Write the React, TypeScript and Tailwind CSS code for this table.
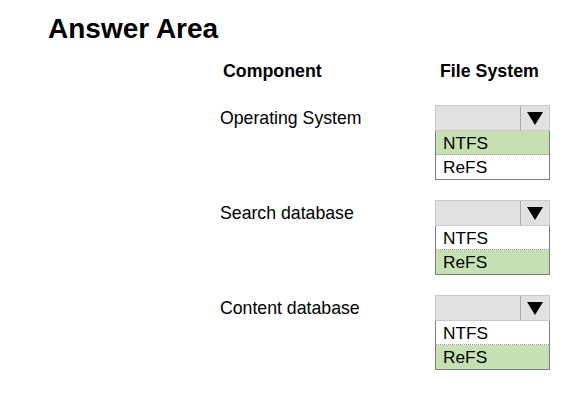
import React from 'react';

type Choice = { label: string; picked: boolean };

const rows: { component: string; choices: Choice[] }[] = [
  {
    component: 'Operating System',
    choices: [
      { label: 'NTFS', picked: true },
      { label: 'ReFS', picked: false },
    ],
  },
  {
    component: 'Search database',
    choices: [
      { label: 'NTFS', picked: false },
      { label: 'ReFS', picked: true },
    ],
  },
  {
    component: 'Content database',
    choices: [
      { label: 'NTFS', picked: false },
      { label: 'ReFS', picked: true },
    ],
  },
];

function Dropdown({ choices }: { choices: Choice[] }) {
  return (
    <div className="w-[115px]">
      <div className="flex h-[26px] border border-[#c9c9c9] bg-[#e1e1e1]">
        <div className="flex-1" />
        <div className="flex w-[29px] items-center justify-center border-l border-[#a9a9a9]">
          <svg width="16" height="13" viewBox="0 0 16 13">
            <polygon points="0,0 16,0 8,13" fill="#000" />
          </svg>
        </div>
      </div>
      <div className="border border-t-0 border-[#7d7d7d]">
        {choices.map((c, i) => (
          <div
            key={c.label}
            className={`flex h-[24px] items-center pl-[7px] pt-[2px] text-[17.3px] leading-none ${
              c.picked ? 'bg-[#c6e0b4]' : 'bg-white'
            } ${i === 0 ? 'border-b border-dotted border-[#9a9a9a]' : ''}`}
          >
            {c.label}
          </div>
        ))}
      </div>
    </div>
  );
}

export default function App() {
  return (
    <div
      className="h-[393px] w-[580px] overflow-hidden bg-white text-black"
      style={{ fontFamily: '"Liberation Sans", Arial, sans-serif' }}
    >
      <h1 className="pl-[48px] pt-[13px] text-[28px] font-bold leading-[32px]">Answer Area</h1>

      <div className="mt-[16px] flex pl-[223px] text-[17.8px] font-bold leading-[20px]">
        <div className="w-[217px]">Component</div>
        <div>File System</div>
      </div>

      <div className="mt-[24px] flex flex-col pl-[220px]">
        {rows.map((r) => (
          <div key={r.component} className="flex h-[95px] items-start">
            <div className="flex h-[26px] w-[215px] items-center text-[17.7px]">{r.component}</div>
            <Dropdown choices={r.choices} />
          </div>
        ))}
      </div>
    </div>
  );
}
